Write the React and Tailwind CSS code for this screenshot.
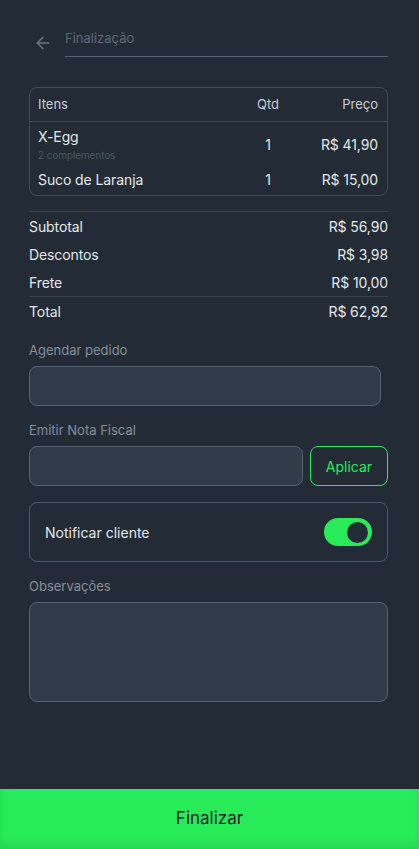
import { ArrowLeft } from 'lucide-react';

const items = [
    { name: 'X-Egg', extra: '2 complementos', qty: 1, price: 'R$ 41,90' },
    { name: 'Suco de Laranja', qty: 1, price: 'R$ 15,00' },
];

const summary = [
    { label: 'Subtotal', value: 'R$ 56,90' },
    { label: 'Descontos', value: 'R$ 3,98' },
    { label: 'Frete', value: 'R$ 10,00' },
];

function Label({ children, className = '' }) {
    return <p className={`text-[13px] leading-[18px] text-[#858f9a] ${className}`}>{children}</p>;
}

export default function App() {
    return (
        <div className="min-h-screen flex flex-col bg-[#232c36] text-[#e4e8ec]" style={{ fontFamily: 'Inter, "Noto Sans", sans-serif' }}>
            <div className="flex-1 pl-[29px] pr-[31px] pt-[28px]">
                {/* Header */}
                <div className="flex items-start">
                    <div className="w-[36px] pl-[4px] pt-[5px]">
                        <ArrowLeft size={20} strokeWidth={1.75} className="text-[#6a7684]" />
                    </div>
                    <div className="flex-1 border-b border-[#56626f] pb-2 text-[13px] leading-5 text-[#5f6b78]">
                        Finalização
                    </div>
                </div>

                {/* Items table */}
                <div className="mt-[30px] rounded-lg border border-[#414c58]">
                    <div className="grid h-[34px] grid-cols-[1fr_60px_80px] items-center border-b border-[#414c58] px-[8px] pr-[9px] text-[13px] text-[#c9cfd5]">
                        <span>Itens</span>
                        <span className="text-center">Qtd</span>
                        <span className="text-right">Preço</span>
                    </div>
                    <div className="flex flex-col gap-[7px] pl-[8px] pr-[9px] pb-[5px] pt-[5px]">
                        {items.map((item) => (
                            <div key={item.name} className="grid grid-cols-[1fr_60px_80px] items-center text-[14px] tracking-[-0.1px]">
                                <div>
                                    <p className="leading-5">{item.name}</p>
                                    {item.extra && <p className="mt-[1px] text-[10px] leading-[14px] text-[#4b5764]">{item.extra}</p>}
                                </div>
                                <span className="text-center">{item.qty}</span>
                                <span className="text-right">{item.price}</span>
                            </div>
                        ))}
                    </div>
                </div>

                {/* Summary */}
                <div className="mt-[15px] border-t border-[#36414c] text-[14px] tracking-[-0.1px]">
                    {summary.map((row) => (
                        <div key={row.label} className="flex h-[28px] items-center justify-between">
                            <span>{row.label}</span>
                            <span>{row.value}</span>
                        </div>
                    ))}
                    <div className="flex h-[29px] items-center justify-between border-t border-[#36414c]">
                        <span>Total</span>
                        <span>R$ 62,92</span>
                    </div>
                </div>

                {/* Agendar */}
                <Label className="mt-[16px]">Agendar pedido</Label>
                <div className="mr-[7px] mt-[7px] h-[40px] rounded-lg border border-[#56626f] bg-[#313c49]" />

                {/* Nota fiscal */}
                <Label className="mt-[15px]">Emitir Nota Fiscal</Label>
                <div className="mt-[7px] flex gap-[7px]">
                    <div className="h-[40px] flex-1 rounded-lg border border-[#56626f] bg-[#313c49]" />
                    <button className="h-[40px] w-[78px] rounded-lg border border-[#29eb5a] text-[14px] text-[#29eb5a]">
                        Aplicar
                    </button>
                </div>

                {/* Notificar */}
                <div className="mt-[16px] flex h-[60px] items-center justify-between rounded-lg border border-[#4b5866] pl-[15px] pr-[15px]">
                    <span className="text-[14px]">Notificar cliente</span>
                    <div className="flex h-[28px] w-[48px] items-center justify-end rounded-full bg-[#29eb5a] pr-[4px]">
                        <div className="h-[21px] w-[21px] rounded-full bg-[#232c36]" />
                    </div>
                </div>

                {/* Observações */}
                <Label className="mt-[15px]">Observações</Label>
                <div className="mt-[7px] h-[100px] rounded-lg border border-[#56626f] bg-[#313c49]" />
            </div>

            <button className="mt-auto h-[60px] w-full bg-[#29eb5a] text-[17px] text-[#17202a] shadow-[inset_0_-6px_8px_rgba(0,0,0,0.08)]">
                Finalizar
            </button>
        </div>
    );
}
